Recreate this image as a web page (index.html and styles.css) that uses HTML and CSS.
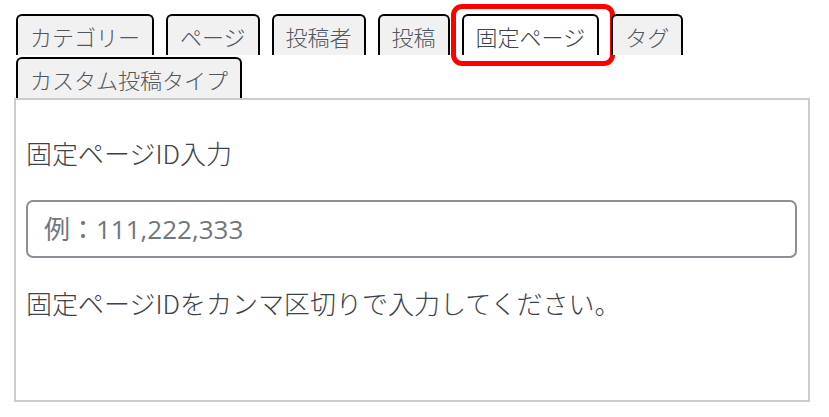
FILE: index.html
```html
<!DOCTYPE html>
<html lang="ja">
<head>
    <meta charset="UTF-8">
    <meta name="viewport" content="width=device-width, initial-scale=1.0">
    <title>固定ページ設定</title>
    <link rel="stylesheet" href="styles.css">
</head>
<body>
    <div class="settings">
        <div class="tabs">
            <button class="tab-btn">カテゴリー</button>
            <button class="tab-btn">ページ</button>
            <button class="tab-btn">投稿者</button>
            <button class="tab-btn">投稿</button>
            <button class="tab-btn active">固定ページ</button>
            <button class="tab-btn">タグ</button>
            <button class="tab-btn">カスタム投稿タイプ</button>
        </div>

        <div class="panel">
            <label class="field-label" for="pageIds">固定ページID入力</label>
            <input type="text" id="pageIds" class="field-input" placeholder="例：111,222,333">
            <p class="field-help">固定ページIDをカンマ区切りで入力してください。</p>
        </div>
    </div>
</body>
</html>
```

FILE: styles.css
```css
* {
    box-sizing: border-box;
}

body {
    margin: 0;
    padding: 14px 19px 0 14px;
    background: #fff;
    color: #3c434a;
    font-family: 'Noto Sans CJK JP', 'Open Sans', sans-serif;
}

.tabs {
    display: flex;
    flex-wrap: wrap;
    column-gap: 12px;
    row-gap: 2px;
    padding-left: 2px;
}

.tab-btn {
    position: relative;
    height: 41px;
    padding: 0 12px;
    margin: 0;
    background: #f1f1f1;
    border: 2px solid #000;
    border-bottom: none;
    border-radius: 6px 6px 0 0;
    font-family: inherit;
    font-size: 22px;
    font-weight: 300;
    line-height: 38px;
    color: #50575e;
    cursor: pointer;
}

    .tab-btn.active {
        background: #fff;
        color: #3c434a;
    }

        .tab-btn.active::after {
            content: '';
            position: absolute;
            top: -12px;
            left: -13px;
            right: -18px;
            bottom: -11px;
            border: 5px solid #f00;
            border-radius: 11px;
            pointer-events: none;
        }

.panel {
    height: 304px;
    padding: 0 11px 0 10px;
    border: 2px solid #ccc;
}

.field-label {
    display: block;
    margin-top: 36px;
    font-size: 26px;
    font-weight: 300;
    line-height: 34px;
}

.field-input {
    display: block;
    width: 100%;
    height: 58px;
    margin-top: 30px;
    padding: 0 16px;
    border: 2px solid #8c8f94;
    border-radius: 7px;
    font-family: 'Open Sans', 'Noto Sans CJK JP', sans-serif;
    font-size: 26px;
    color: #2c3338;
}

    .field-input::placeholder {
        color: #72777c;
    }

.field-help {
    margin: 28px 0 0;
    font-size: 26px;
    font-weight: 300;
    line-height: 34px;
}
```
